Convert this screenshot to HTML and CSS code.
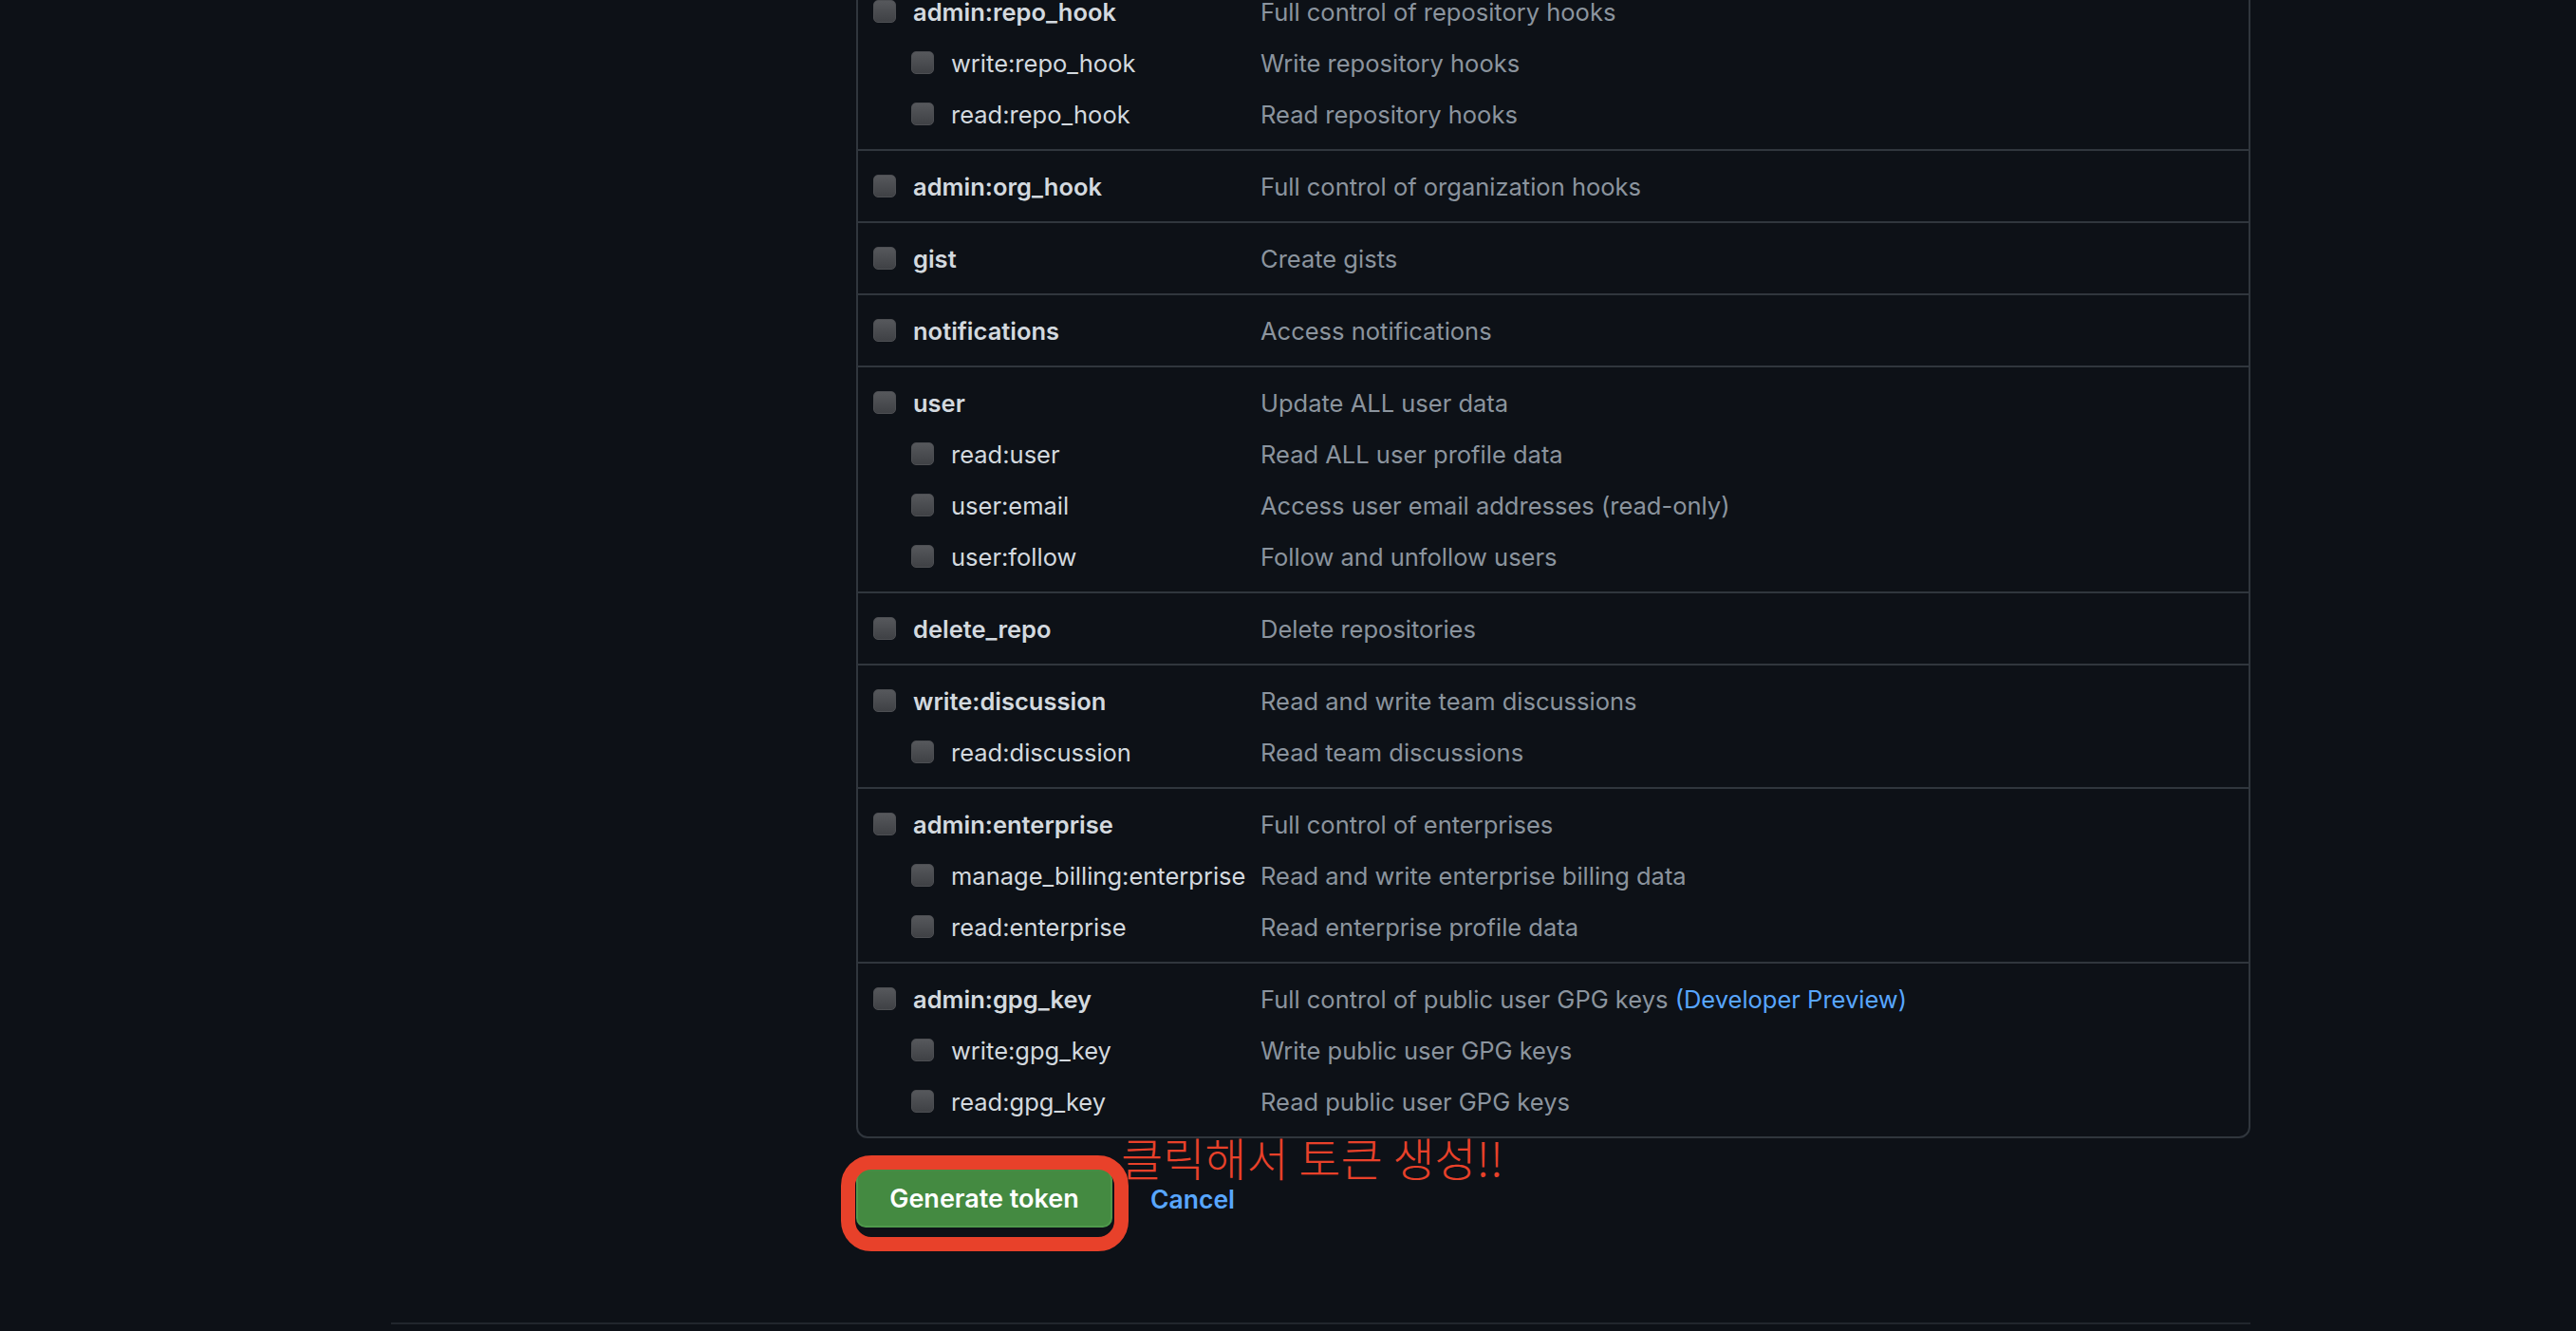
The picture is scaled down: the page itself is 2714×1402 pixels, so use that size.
FILE: index.html
```html
<!DOCTYPE html>
<html lang="en">
<head>
<meta charset="utf-8">
<title>New personal access token</title>
<link rel="stylesheet" href="styles.css">
</head>
<body>
<div class="page">
  <div class="layout">
    <aside class="sidebar"></aside>
    <main class="main">
      <div class="scopes">
        <div class="scope-group">
          <div class="scope-line parent"><span class="check"></span><span class="scope-name">admin:repo_hook</span><span class="scope-desc">Full control of repository hooks</span></div>
          <div class="scope-line child"><span class="check"></span><span class="scope-name">write:repo_hook</span><span class="scope-desc">Write repository hooks</span></div>
          <div class="scope-line child"><span class="check"></span><span class="scope-name">read:repo_hook</span><span class="scope-desc">Read repository hooks</span></div>
        </div>
        <div class="scope-group">
          <div class="scope-line parent"><span class="check"></span><span class="scope-name">admin:org_hook</span><span class="scope-desc">Full control of organization hooks</span></div>
        </div>
        <div class="scope-group">
          <div class="scope-line parent"><span class="check"></span><span class="scope-name">gist</span><span class="scope-desc">Create gists</span></div>
        </div>
        <div class="scope-group">
          <div class="scope-line parent"><span class="check"></span><span class="scope-name">notifications</span><span class="scope-desc">Access notifications</span></div>
        </div>
        <div class="scope-group">
          <div class="scope-line parent"><span class="check"></span><span class="scope-name">user</span><span class="scope-desc">Update ALL user data</span></div>
          <div class="scope-line child"><span class="check"></span><span class="scope-name">read:user</span><span class="scope-desc">Read ALL user profile data</span></div>
          <div class="scope-line child"><span class="check"></span><span class="scope-name">user:email</span><span class="scope-desc">Access user email addresses (read-only)</span></div>
          <div class="scope-line child"><span class="check"></span><span class="scope-name">user:follow</span><span class="scope-desc">Follow and unfollow users</span></div>
        </div>
        <div class="scope-group">
          <div class="scope-line parent"><span class="check"></span><span class="scope-name">delete_repo</span><span class="scope-desc">Delete repositories</span></div>
        </div>
        <div class="scope-group">
          <div class="scope-line parent"><span class="check"></span><span class="scope-name">write:discussion</span><span class="scope-desc">Read and write team discussions</span></div>
          <div class="scope-line child"><span class="check"></span><span class="scope-name">read:discussion</span><span class="scope-desc">Read team discussions</span></div>
        </div>
        <div class="scope-group">
          <div class="scope-line parent"><span class="check"></span><span class="scope-name">admin:enterprise</span><span class="scope-desc">Full control of enterprises</span></div>
          <div class="scope-line child"><span class="check"></span><span class="scope-name">manage_billing:enterprise</span><span class="scope-desc">Read and write enterprise billing data</span></div>
          <div class="scope-line child"><span class="check"></span><span class="scope-name">read:enterprise</span><span class="scope-desc">Read enterprise profile data</span></div>
        </div>
        <div class="scope-group">
          <div class="scope-line parent"><span class="check"></span><span class="scope-name">admin:gpg_key</span><span class="scope-desc">Full control of public user GPG keys <a class="link" href="#">(Developer Preview)</a></span></div>
          <div class="scope-line child"><span class="check"></span><span class="scope-name">write:gpg_key</span><span class="scope-desc">Write public user GPG keys</span></div>
          <div class="scope-line child"><span class="check"></span><span class="scope-name">read:gpg_key</span><span class="scope-desc">Read public user GPG keys</span></div>
        </div>
      </div>
      <div class="form-actions">
        <div class="btn-wrap">
          <button class="btn-primary" type="button">Generate token</button>
          <span class="ring"></span>
          <span class="note">클릭해서 토큰 생성!!</span>
        </div>
        <a class="cancel" href="#">Cancel</a>
      </div>
    </main>
  </div>
  <footer class="footer"></footer>
</div>
</body>
</html>
```

FILE: styles.css
```css
html, body {
  margin: 0;
  padding: 0;
  background: #0d1117;
}

body {
  font-family: Inter, "Noto Sans", "Liberation Sans", sans-serif;
  font-size: 25.5px;
  color: #c9d1d9;
  overflow: hidden;
  height: 1402px;
}

.page {
  padding-left: 412px;
  width: 1959px;
}

.layout {
  display: grid;
  grid-template-columns: 490px 1469px;
}

.main {
  margin-top: -27px;
}

.scopes {
  border: 2px solid #30363d;
  border-radius: 12px;
}

.scope-group {
  padding: 10px 16px;
}

.scope-group + .scope-group {
  border-top: 2px solid #30363d;
}

.scope-line {
  display: flex;
  align-items: center;
  height: 54px;
  white-space: nowrap;
}

.check {
  flex: none;
  width: 24px;
  height: 24px;
  box-sizing: border-box;
  border-radius: 5px;
  background: linear-gradient(180deg, #56585c 0%, #3f4145 100%);
  border: 1px solid #4d4f53;
  margin-right: 18px;
}

.scope-name {
  flex: none;
  color: #d3d9df;
}

.parent .scope-name {
  width: 366px;
  font-weight: 600;
}

.child {
  padding-left: 40px;
}

.child .scope-name {
  width: 326px;
}

.scope-desc {
  color: #8b949e;
}

.link {
  color: #58a6ff;
  text-decoration: none;
}

.form-actions {
  display: flex;
  align-items: center;
  margin-top: 33px;
  height: 61px;
}

.btn-wrap {
  position: relative;
  width: 270px;
  height: 61px;
}

.btn-primary {
  display: block;
  width: 270px;
  height: 61px;
  box-sizing: border-box;
  padding: 0;
  border: 2px solid #4f9a4c;
  border-top-color: #468c43;
  border-radius: 10px;
  background: #448a41;
  color: #ffffff;
  font-family: Inter, "Noto Sans", sans-serif;
  font-size: 27px;
  font-weight: 600;
}

.ring {
  position: absolute;
  left: -16px;
  top: -15px;
  right: -17px;
  bottom: -25px;
  border: 15px solid #e8412a;
  border-radius: 32px;
}

.note {
  position: absolute;
  left: 279px;
  top: -34px;
  font-family: "Noto Sans CJK KR", "Noto Sans", sans-serif;
  font-size: 48px;
  line-height: 40px;
  font-weight: 300;
  color: #e8412a;
  white-space: nowrap;
}

.cancel {
  margin-left: 40px;
  color: #58a6ff;
  font-size: 26.5px;
  line-height: 32px;
  font-weight: 600;
  text-decoration: none;
}

.footer {
  margin-top: 100px;
  border-top: 2px solid #21262d;
}
```
